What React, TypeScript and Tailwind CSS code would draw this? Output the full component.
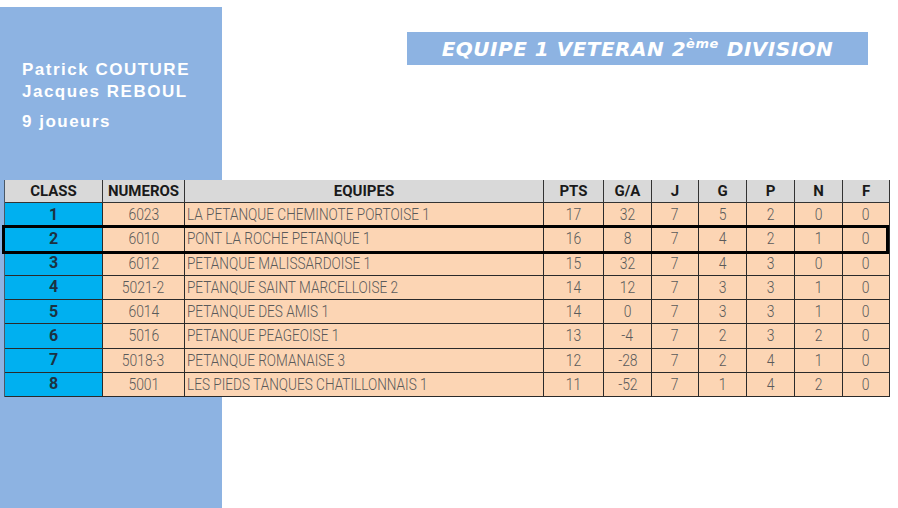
import React from "react";

type Row = { c: string; n: string; e: string; pts: string; ga: string; j: string; g: string; p: string; nn: string; f: string };

const rows: Row[] = [
  { c: "1", n: "6023", e: "LA PETANQUE CHEMINOTE PORTOISE 1", pts: "17", ga: "32", j: "7", g: "5", p: "2", nn: "0", f: "0" },
  { c: "2", n: "6010", e: "PONT LA ROCHE PETANQUE 1", pts: "16", ga: "8", j: "7", g: "4", p: "2", nn: "1", f: "0" },
  { c: "3", n: "6012", e: "PETANQUE MALISSARDOISE 1", pts: "15", ga: "32", j: "7", g: "4", p: "3", nn: "0", f: "0" },
  { c: "4", n: "5021-2", e: "PETANQUE SAINT MARCELLOISE 2", pts: "14", ga: "12", j: "7", g: "3", p: "3", nn: "1", f: "0" },
  { c: "5", n: "6014", e: "PETANQUE DES AMIS 1", pts: "14", ga: "0", j: "7", g: "3", p: "3", nn: "1", f: "0" },
  { c: "6", n: "5016", e: "PETANQUE PEAGEOISE 1", pts: "13", ga: "-4", j: "7", g: "2", p: "3", nn: "2", f: "0" },
  { c: "7", n: "5018-3", e: "PETANQUE ROMANAISE 3", pts: "12", ga: "-28", j: "7", g: "2", p: "4", nn: "1", f: "0" },
  { c: "8", n: "5001", e: "LES PIEDS TANQUES CHATILLONNAIS 1", pts: "11", ga: "-52", j: "7", g: "1", p: "4", nn: "2", f: "0" },
];

const headers = ["CLASS", "NUMEROS", "EQUIPES", "PTS", "G/A", "J", "G", "P", "N", "F"];

function Num({ v }: { v: string }) {
  return (
    <div className="flex items-center justify-center border-r border-b border-[#2a2a2a] bg-[#fcd5b4] text-[#5a5a5a]">
      <span className="inline-block scale-x-[0.82] text-[17px] font-light leading-none">{v}</span>
    </div>
  );
}

export default function App() {
  return (
    <div className="grid w-[898px] h-[508px] bg-white overflow-hidden" style={{ fontFamily: "Roboto, 'Liberation Sans', sans-serif" }}>
      <div className="col-start-1 row-start-1 mt-[7px] w-[222px] h-[501px] bg-[#8db3e2] pl-[22px] pt-[52px] text-white font-bold text-[17px] leading-[22px] tracking-[1.5px]" style={{ fontFamily: "'Liberation Sans', Arial, sans-serif" }}>
        <div>Patrick COUTURE</div>
        <div>Jacques REBOUL</div>
        <div className="mt-[8px]">9 joueurs</div>
      </div>
      <div className="col-start-1 row-start-1 flex flex-col">
        <div className="ml-[407px] mt-[32px] w-[461px] h-[33px] bg-[#8db3e2] flex items-center justify-center text-white italic font-bold text-[20px] leading-none tracking-[0.5px]" style={{ fontFamily: "'DejaVu Sans', sans-serif" }}>
          <span>EQUIPE 1 VETERAN 2</span>
          <span className="text-[13px] self-start mt-[5px] mr-[8px]">ème</span>
          <span>DIVISION</span>
        </div>
        <div className="relative ml-[4px] mt-[115px] w-[885px]">
          <div className="grid grid-cols-[98px_82px_359px_60px_48px_47px_48px_48px_48px_47px] grid-rows-[23px_repeat(8,24.25px)] border-l border-[#4a5866]">
            {headers.map((h) => (
              <div key={h} className="flex items-center justify-center bg-[#d9d9d9] border-r border-b border-[#333] text-[15px] font-bold text-[#1a1a1a] leading-none">
                {h}
              </div>
            ))}
            {rows.map((r) => (
              <React.Fragment key={r.c}>
                <div className="flex items-center justify-center bg-[#00b0f0] border-r border-b border-[#2a2a2a] text-[#1c3242] font-bold text-[16px] leading-none">{r.c}</div>
                <Num v={r.n} />
                <div className="flex items-center border-r border-b border-[#2a2a2a] bg-[#fcd5b4] text-[#5a5a5a] pl-[2px]">
                  <span className="inline-block origin-left scale-x-[0.8] text-[17px] font-light leading-none whitespace-nowrap">{r.e}</span>
                </div>
                <Num v={r.pts} />
                <Num v={r.ga} />
                <Num v={r.j} />
                <Num v={r.g} />
                <Num v={r.p} />
                <Num v={r.nn} />
                <Num v={r.f} />
              </React.Fragment>
            ))}
          </div>
          <div className="absolute left-[-2px] top-[45px] w-[887px] h-[29px] border-[3px] border-black pointer-events-none" />
        </div>
      </div>
    </div>
  );
}
